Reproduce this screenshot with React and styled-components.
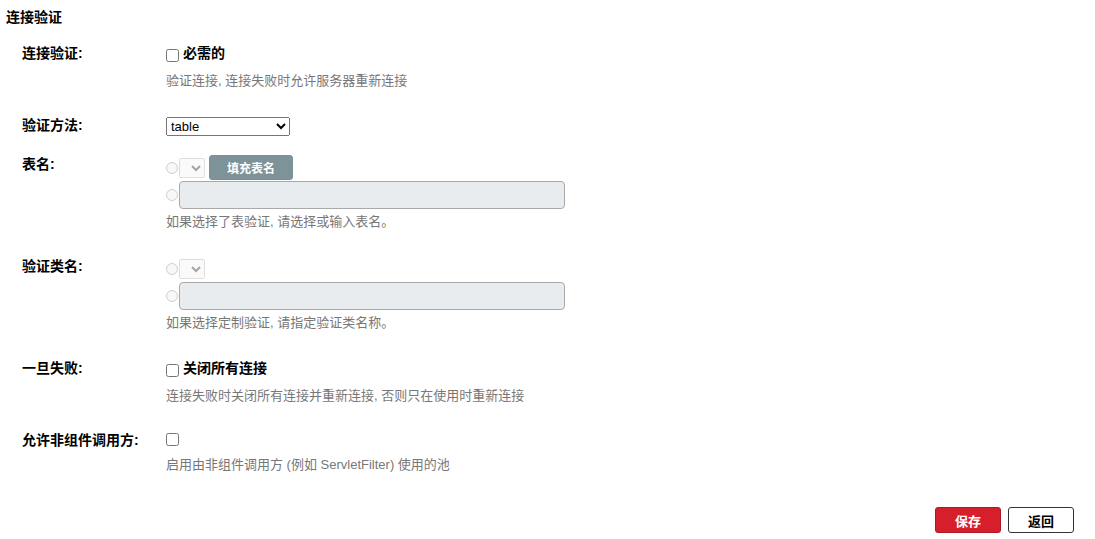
import React from "react";
import styled, { createGlobalStyle } from "styled-components";

/* ================= GLOBAL ================= */

const GlobalStyle = createGlobalStyle`
  body {
    margin: 0;
    background: #fff;
    font-family: "Liberation Sans", "Noto Sans CJK SC", sans-serif;
    color: #000;
  }
`;

/* ================= PAGE ================= */

const Page = styled.div`
  padding: 8px 6px 0;
`;

const SectionTitle = styled.div`
  font-size: 14px;
  font-weight: bold;
  line-height: 18px;
  margin-bottom: 18px;
`;

const Form = styled.div`
  padding-left: 16px;
`;

/* ================= ROWS ================= */

const Row = styled.div`
  display: grid;
  grid-template-columns: 144px 1fr;
  margin-bottom: ${({ $gap }) => ($gap ?? 26)}px;
`;

const Label = styled.div`
  font-size: 14px;
  font-weight: bold;
  line-height: 18px;
`;

const Field = styled.div`
  display: flex;
  flex-direction: column;
  align-items: flex-start;
`;

const Help = styled.div`
  font-size: 13px;
  line-height: 18px;
  color: #777;
  margin-top: ${({ $gap }) => $gap}px;
`;

/* ================= CHECKBOX ================= */

const CheckLine = styled.label`
  display: flex;
  align-items: flex-start;
  gap: 4px;
  font-size: 14px;
  font-weight: bold;
  line-height: 18px;
`;

const Checkbox = styled.input.attrs({ type: "checkbox" })`
  width: 13px;
  height: 13px;
  margin: ${({ $bare }) => ($bare ? 2 : 5)}px 0 0 0;
`;

/* ================= SELECTS / INPUTS ================= */

const MethodSelect = styled.select`
  width: 124px;
  height: 19px;
  margin-top: 1px;
  font-family: "Liberation Sans", sans-serif;
  font-size: 13px;
  color: #000;
`;

const ChoiceLine = styled.div`
  display: flex;
  align-items: center;
  min-height: 24px;
  margin-bottom: 1px;
`;

const Radio = styled.input.attrs({ type: "radio", disabled: true })`
  width: 12px;
  height: 12px;
  margin: 0 1px 0 0;
`;

const MiniSelect = styled.select.attrs({ disabled: true })`
  width: 26px;
  height: 20px;
  font-size: 13px;
`;

const FillButton = styled.button`
  width: 84px;
  height: 25px;
  margin-left: 4px;
  border: 1px solid #7d9097;
  border-radius: 3px;
  background: #7e9299;
  color: #fff;
  font-family: "Liberation Sans", "Noto Sans CJK SC", sans-serif;
  font-size: 12px;
  font-weight: bold;
  padding: 0;
`;

const NameInput = styled.input.attrs({ type: "text", disabled: true })`
  box-sizing: border-box;
  width: 386px;
  height: 28px;
  margin: 0;
  border: 1px solid #a9a9a9;
  border-radius: 4px;
  background: #e9ecef;
`;

/* ================= FOOTER ================= */

const Footer = styled.div`
  display: flex;
  justify-content: flex-end;
  gap: 7px;
  padding-right: 15px;
  margin-top: 33px;
`;

const ActionButton = styled.button`
  box-sizing: border-box;
  width: 66px;
  height: 26px;
  padding: 0;
  border-radius: 3px;
  font-family: "Liberation Sans", "Noto Sans CJK SC", sans-serif;
  font-size: 13px;
  font-weight: bold;
  border: 1px solid ${({ $primary }) => ($primary ? "#a81c26" : "#333")};
  background: ${({ $primary }) => ($primary ? "#d71f2c" : "#fff")};
  color: ${({ $primary }) => ($primary ? "#fff" : "#000")};
`;

/* ================= COMPONENT ================= */

const ChoiceField = ({ withButton }) => (
  <Field>
    <ChoiceLine>
      <Radio name={withButton ? "table" : "class"} />
      <MiniSelect />
      {withButton && <FillButton>填充表名</FillButton>}
    </ChoiceLine>
    <ChoiceLine>
      <Radio name={withButton ? "table" : "class"} />
      <NameInput />
    </ChoiceLine>
  </Field>
);

const App = () => {
  return (
    <>
      <GlobalStyle />
      <Page>
        <SectionTitle>连接验证</SectionTitle>
        <Form>
          <Row>
            <Label>连接验证:</Label>
            <Field>
              <CheckLine>
                <Checkbox />
                必需的
              </CheckLine>
              <Help $gap={10}>验证连接, 连接失败时允许服务器重新连接</Help>
            </Field>
          </Row>

          <Row $gap={19}>
            <Label>验证方法:</Label>
            <Field>
              <MethodSelect defaultValue="table">
                <option value="table">table</option>
                <option value="custom">custom</option>
              </MethodSelect>
            </Field>
          </Row>

          <Row>
            <Label>表名:</Label>
            <Field>
              <ChoiceField withButton />
              <Help $gap={3}>如果选择了表验证, 请选择或输入表名。</Help>
            </Field>
          </Row>

          <Row $gap={27}>
            <Label>验证类名:</Label>
            <Field>
              <ChoiceField />
              <Help $gap={3}>如果选择定制验证, 请指定验证类名称。</Help>
            </Field>
          </Row>

          <Row>
            <Label>一旦失败:</Label>
            <Field>
              <CheckLine>
                <Checkbox />
                关闭所有连接
              </CheckLine>
              <Help $gap={10}>
                连接失败时关闭所有连接并重新连接, 否则只在使用时重新连接
              </Help>
            </Field>
          </Row>

          <Row $gap={0}>
            <Label>允许非组件调用方:</Label>
            <Field>
              <CheckLine>
                <Checkbox $bare />
              </CheckLine>
              <Help $gap={10}>
                启用由非组件调用方 (例如 ServletFilter) 使用的池
              </Help>
            </Field>
          </Row>
        </Form>

        <Footer>
          <ActionButton $primary>保存</ActionButton>
          <ActionButton>返回</ActionButton>
        </Footer>
      </Page>
    </>
  );
};

export default App;
